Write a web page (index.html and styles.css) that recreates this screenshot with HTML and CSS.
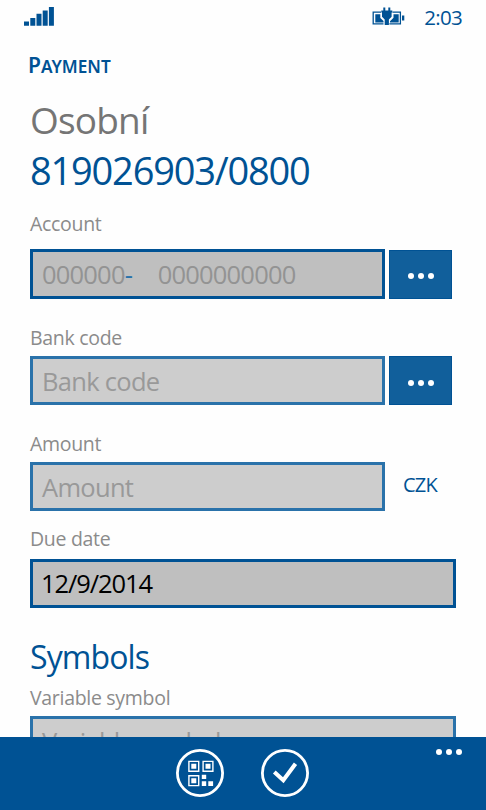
FILE: index.html
```
<!DOCTYPE html>
<html lang="en">
<head>
    <meta charset="UTF-8">
    <meta name="viewport" content="width=device-width, initial-scale=1.0">
    <title>Payment</title>
    <link rel="stylesheet" href="styles.css">
</head>
<body>
    <div class="phone">
        <header class="status-bar">
            <svg class="signal" width="31" height="20" viewBox="0 0 31 20">
                <path d="M0 15.500h5v4.300H0zM6.300 12h5v7.800h-5zM12.500 7.800h5v12h-5zM18.700 4.500h5v15.300h-5zM24.900 1h5v18.800h-5z"/>
            </svg>
            <svg class="battery" width="33" height="19" viewBox="0 0 33 19">
                <path class="battery-outline" d="M9 5.200H1.200v11.600h10.300M20.500 5.200h7.900v11.600h-11"/>
                <path d="M3.300 7.200h5v3.700l3.200 3.200v1.400H3.300zM21.500 7.200h5.200v8.300h-8.700v-1.300l3.500-3.500zM30 8.500h2.300v5H30z"/>
                <path d="M11.300.5h2v3h3V.5h2v3h2v2h-.7v4.300l-2.700 2.700V18H12.700v-5.500L10 9.800V5.500h-.7v-2h2z"/>
            </svg>
            <span class="clock">2:03</span>
        </header>

        <main class="content">
            <h1><span>P</span>AYMENT</h1>
            <div class="account-name">Osobní</div>
            <div class="account-number">819026903/0800</div>

            <form>
                <div class="field account">
                    <label>Account</label>
                    <div class="row">
                        <div class="input dark"><span class="prefix">000000</span><span class="dash">-</span><span class="number">0000000000</span></div>
                        <button type="button" class="more"><i></i><i></i><i></i></button>
                    </div>
                </div>
                <div class="field bank">
                    <label>Bank code</label>
                    <div class="row">
                        <div class="input">Bank code</div>
                        <button type="button" class="more"><i></i><i></i><i></i></button>
                    </div>
                </div>
                <div class="field amount">
                    <label>Amount</label>
                    <div class="row">
                        <div class="input">Amount</div>
                        <span class="currency">CZK</span>
                    </div>
                </div>
                <div class="field date">
                    <label>Due date</label>
                    <div class="input dark wide">12/9/2014</div>
                </div>

                <h2>Symbols</h2>
                <div class="field variable">
                    <label>Variable symbol</label>
                    <div class="input wide">Variable symbol</div>
                </div>
            </form>
        </main>

        <footer class="app-bar">
            <svg class="round-button" width="50" height="50" viewBox="0 0 50 50">
                <circle cx="25" cy="25" r="22.600"/>
                <path class="qr-frame" d="M13.900 13.400h9.800v9.800h-9.800zM28.100 13.400h9.800v9.800h-9.800zM13.900 27.800h9.800v9.800h-9.800z"/>
                <path class="solid" d="M16.300 15.800h5v5h-5zM30.500 15.800h5v5h-5zM16.300 30.200h5v5h-5zM26.800 26.800h4.400v4.200h-4.400zM26.800 33.300h4.400v4.600h-4.400zM33.300 33.300h4.800v4.600h-4.800z"/>
            </svg>
            <svg class="round-button" width="50" height="50" viewBox="0 0 50 50">
                <circle cx="25" cy="25" r="22.600"/>
                <path class="check" d="M14.300 24l9 8.300L35.500 15.800"/>
            </svg>
            <div class="menu-dots"><i></i><i></i><i></i></div>
        </footer>
    </div>
</body>
</html>
```
FILE: styles.css
```
* {
    box-sizing: border-box;
}
body {
    margin: 0;
    background: #fefefe;
    font-family: "Open Sans", "Noto Sans", sans-serif;
    color: #005294;
}
.phone {
    display: flex;
    flex-direction: column;
    width: 486px;
    height: 810px;
    overflow: hidden;
}
.status-bar {
    display: flex;
    flex: none;
    align-items: flex-start;
    height: 35px;
    padding: 6px 24px 0;
}
.status-bar svg {
    fill: #005294;
}
.battery {
    margin: 1px 19px 0 auto;
}
.battery .battery-outline {
    fill: none;
    stroke: #005294;
    stroke-width: 1.3;
}
.clock {
    font-size: 20.5px;
    line-height: 23px;
    letter-spacing: -0.7px;
}
.content {
    flex: 1;
    min-height: 0;
    padding: 15px 30px 0;
    overflow: hidden;
}
h1 {
    height: 30px;
    margin: 0 0 15px -2px;
    font-family: "Noto Sans", sans-serif;
    font-size: 17.2px;
    font-weight: 600;
    line-height: 30px;
}
h1 span {
    font-size: 21px;
}
.account-name,
.account-number {
    font-size: 37px;
    line-height: 50px;
}
.account-name {
    color: #757575;
    letter-spacing: -0.8px;
}
.account-number {
    font-size: 38px;
    letter-spacing: -1.2px;
}
label {
    display: block;
    padding-top: 1px;
    color: #8b8b8b;
    font-size: 19.5px;
    line-height: 27px;
    letter-spacing: -0.3px;
}
.row {
    display: flex;
    align-items: center;
    gap: 4px;
}
.input {
    width: 355px;
    height: 49px;
    padding: 0 9px;
    border: 3px solid #2a72aa;
    background: #cdcdcd;
    color: #999;
    font-size: 25.5px;
    line-height: 44px;
    letter-spacing: -0.7px;
    white-space: nowrap;
}
.input.dark {
    border-color: #005294;
    background: #bfbfbf;
}
.input.wide {
    width: 426px;
}
.more {
    display: flex;
    align-items: center;
    justify-content: center;
    gap: 4px;
    width: 63px;
    height: 49px;
    padding: 4px 0 0;
    border: 1px solid #005294;
    background: #115f9b;
}
.more i,
.menu-dots i {
    width: 6px;
    height: 6px;
    border-radius: 50%;
    background: #fff;
}
.account {
    margin-top: 14px;
}
.account .row {
    margin-top: 12px;
}
.account .input {
    display: flex;
    height: 50px;
    color: #939393;
    letter-spacing: -0.8px;
}
.dash {
    width: 33px;
    color: #2a72aa;
}
.bank,
.amount {
    margin-top: 24px;
}
.bank .row,
.amount .row,
.variable .input {
    margin-top: 5px;
}
.currency {
    margin: -4px 0 0 14px;
    font-size: 20px;
    letter-spacing: -0.8px;
}
.date {
    margin-top: 13px;
}
.date .input {
    margin-top: 7px;
    padding-left: 8px;
    color: #000;
    line-height: 43px;
    letter-spacing: -1.1px;
}
h2 {
    margin: 27px 0 4px;
    font-size: 32px;
    font-weight: 400;
    line-height: 44px;
    letter-spacing: -0.9px;
}
.app-bar {
    position: relative;
    display: flex;
    flex: none;
    justify-content: center;
    gap: 35px;
    height: 73px;
    padding: 11px 2px 0 0;
    background: #005294;
}
.round-button {
    fill: none;
    stroke: #fff;
    stroke-width: 2.8;
}
.round-button .qr-frame {
    stroke-width: 1.4;
}
.round-button .solid {
    fill: #fff;
    stroke: none;
}
.round-button .check {
    stroke-width: 4;
}
.menu-dots {
    position: absolute;
    top: 12px;
    right: 24px;
    display: flex;
    gap: 4px;
}
```
